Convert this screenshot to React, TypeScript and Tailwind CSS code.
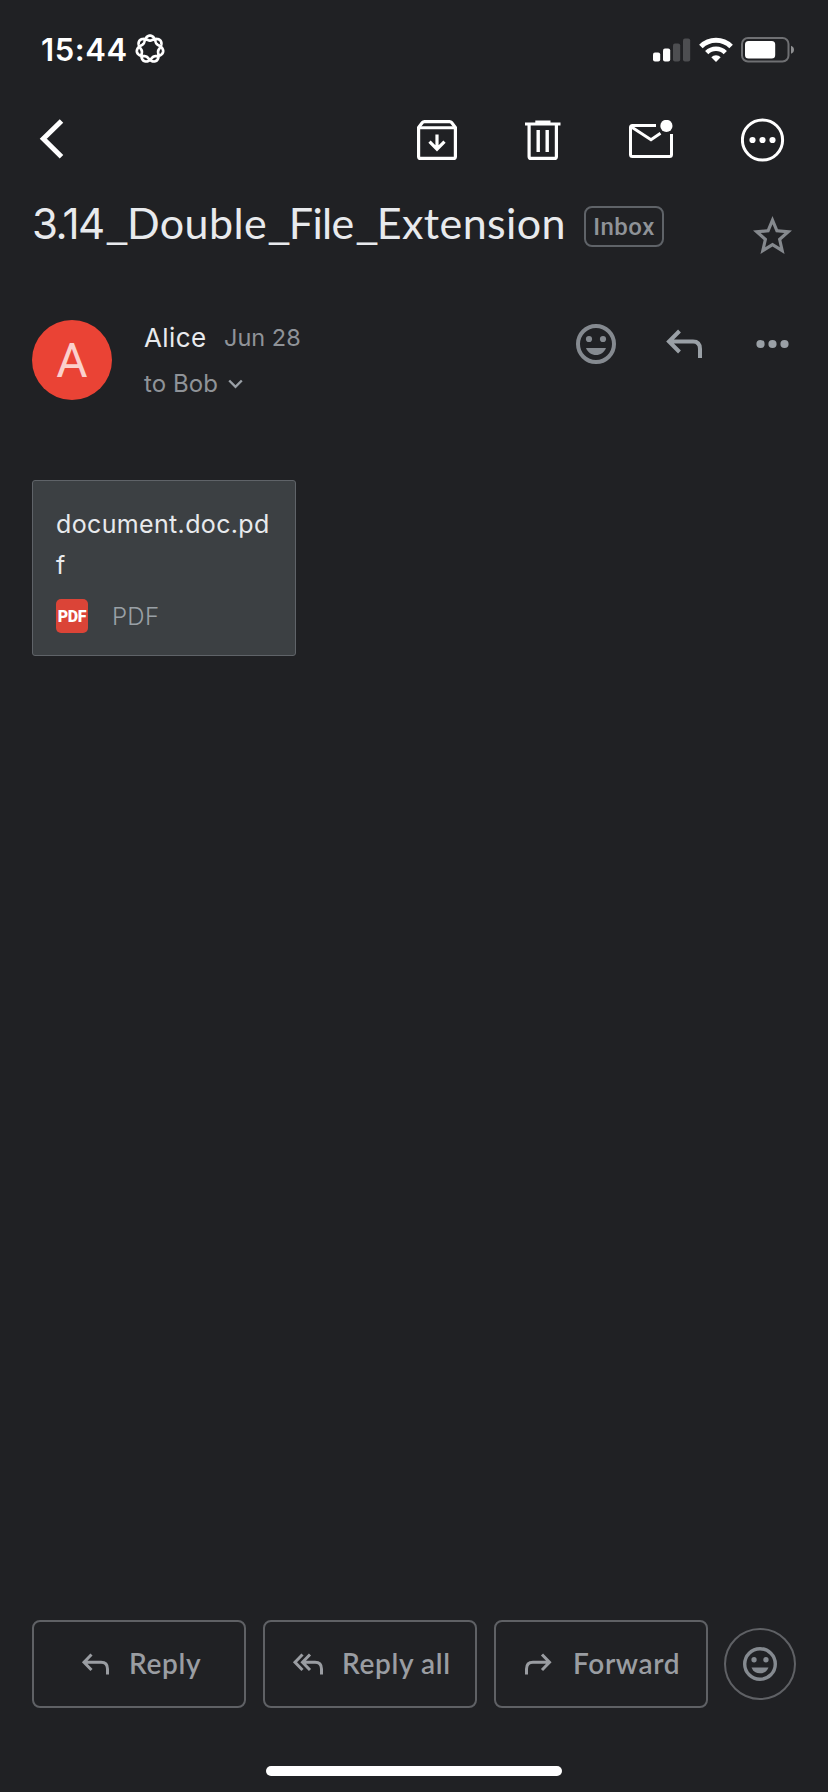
import type { ReactNode } from "react";

// One strand that winds round twice: seven lobes, seven crossings.
const flowerPath =
  Array.from({ length: 281 }, (_, i) => {
    const t = (i / 280) * Math.PI * 4;
    const r = 10.9 + 2.5 * Math.cos(3.5 * t);
    const x = 15 + r * Math.sin(t);
    const y = 15 - r * Math.cos(t);
    return `${i === 0 ? "M" : "L"}${x.toFixed(2)} ${y.toFixed(2)}`;
  }).join("") + "Z";

function FlowerIcon() {
  return (
    <svg className="ml-[8px] h-[30px] w-[30px]" viewBox="0 0 30 30" fill="none" stroke="#fff" strokeWidth="2.7">
      <path d={flowerPath} />
    </svg>
  );
}

function StatusBar() {
  return (
    <header className="flex h-[98px] items-center pl-[41px] pr-[33px]">
      <div className="flex items-center">
        <span className="w-[86px] whitespace-nowrap text-[31px] font-semibold leading-none tracking-[0.6px] text-white">15:44</span>
        <FlowerIcon />
      </div>
      <div className="ml-auto flex items-center pt-px">
        <svg className="h-[26px] w-[38px]" viewBox="0 0 38 26">
          <rect x="0" y="15.5" width="7.2" height="9" rx="2" fill="#fff" />
          <rect x="10" y="11.5" width="7.2" height="13" rx="2" fill="#fff" />
          <rect x="20" y="6.5" width="7.2" height="18" rx="2" fill="#4d4e51" />
          <rect x="30" y="1.5" width="7.2" height="23" rx="2" fill="#4d4e51" />
        </svg>
        <svg className="ml-[8px] h-[26px] w-[34px]" viewBox="0 0 34 26" fill="none" stroke="#fff">
          <path d="M1.9 9.6a21.4 21.4 0 0 1 30.2 0" strokeWidth="5" />
          <path d="M7.7 15.6a13.2 13.2 0 0 1 18.6 0" strokeWidth="4.6" />
          <path d="M12.3 20.3a6.6 6.6 0 0 1 9.4 0L17 25Z" fill="#fff" stroke="none" />
        </svg>
        <svg className="ml-[8px] h-[26px] w-[54px]" viewBox="0 0 54 26">
          <rect x="1" y="1" width="46.5" height="23.5" rx="6" fill="none" stroke="#6f7073" strokeWidth="2" />
          <rect x="4" y="4" width="30.2" height="17.5" rx="3.5" fill="#fff" />
          <path d="M50 8.8c4 1.2 4 6.8 0 8z" fill="#8e8f91" />
        </svg>
      </div>
    </header>
  );
}

function Toolbar() {
  return (
    <nav className="flex h-[84px] items-center pl-[38px] pr-[43px]">
      <svg className="h-[44px] w-[28px]" viewBox="0 0 28 44" fill="none" stroke="#fff" strokeWidth="5">
        <path d="M23.5 3 5.3 20.8 23.5 38.8" />
      </svg>
      <svg className="ml-auto h-[40px] w-[40px]" viewBox="0 0 40 40" fill="none" stroke="#fff" strokeWidth="3.2">
        <path d="M1.6 7.5 5.4 2.6Q6.2 1.6 7.5 1.6H32.5Q33.8 1.6 34.6 2.6L38.4 7.5V36.4Q38.4 38.4 36.4 38.4H3.6Q1.6 38.4 1.6 36.4Z" />
        <path d="M2 7.8H38" strokeWidth="3" />
        <path d="M20 14.5V28M12.5 21.7 20 29.2 27.5 21.7" />
      </svg>
      <svg className="ml-[68px] h-[40px] w-[36px]" viewBox="0 0 36 40" fill="none" stroke="#fff" strokeWidth="3.2">
        <path d="M0 4H35.5M10.3 2H25.5" />
        <path d="M4.1 4V36.4Q4.1 38.4 6.1 38.4H29.4Q31.4 38.4 31.4 36.4V4" />
        <path d="M13.2 10V32M22.2 10V32" strokeWidth="3.4" />
      </svg>
      <svg className="ml-[68px] h-[40px] w-[45px]" viewBox="0 0 45 40" fill="none" stroke="#fff" strokeWidth="3">
        <path d="M27 5.5H3.5Q1.5 5.5 1.5 7.5V34.5Q1.5 36.5 3.5 36.5H40.5Q42.5 36.5 42.5 34.5V14" />
        <path d="M2.5 7 22 19.7 31.5 13.3" />
        <circle cx="37.4" cy="5.9" r="6.1" fill="#fff" stroke="none" />
      </svg>
      <svg className="ml-[67px] h-[44px] w-[44px]" viewBox="0 0 44 44">
        <circle cx="21.5" cy="22" r="20.1" fill="none" stroke="#fff" strokeWidth="3" />
        <circle cx="11.5" cy="22" r="3.1" fill="#fff" />
        <circle cx="21.5" cy="22" r="3.1" fill="#fff" />
        <circle cx="31.5" cy="22" r="3.1" fill="#fff" />
      </svg>
    </nav>
  );
}

function Underscore() {
  return <span className="-ml-px mr-[5px] w-[17px] origin-left scale-x-[1.22] tracking-normal">_</span>;
}

function Subject() {
  return (
    <section className="flex h-[118px] items-start pl-[32px] pr-[36px] pt-[24px]">
      <h1 className="-mt-[3px] flex w-[534px] items-baseline whitespace-nowrap font-['Lato'] text-[43px] leading-[40px] tracking-[0.4px] text-[#e8eaed]">
        <span className="w-[74px] font-['Inter'] text-[42px] tracking-[-1.5px]">3.14</span>
        <Underscore />
        <span className="w-[141px]">Double</span>
        <Underscore />
        <span className="w-[67px] tracking-[-0.7px]">File</span>
        <Underscore />
        <span>Extension</span>
      </h1>
      <span className="ml-[18px] flex h-[41px] w-[80px] items-center justify-center rounded-[8px] border-2 border-[#5f6368] font-['Roboto'] text-[24px] font-medium tracking-[0.5px] text-[#8f9398]">
        Inbox
      </span>
      <svg className="ml-auto mt-[10px] h-[38px] w-[39px]" viewBox="2 2 20 19" preserveAspectRatio="none">
        <path
          fill="#85898e"
          d="M22 9.24l-7.19-.62L12 2 9.19 8.63 2 9.24l5.46 4.73L5.82 21 12 17.27 18.18 21l-1.63-7.03L22 9.24zM12 15.4l-3.76 2.27 1-4.28-3.32-2.88 4.38-.38L12 6.1l1.71 4.04 4.38.38-3.32 2.88 1 4.28L12 15.4z"
        />
      </svg>
    </section>
  );
}

function SmileIcon({ size }: { size: number }) {
  return (
    <svg width={size} height={size} viewBox="0 0 40 40" fill="#858a90">
      <circle cx="20" cy="20" r="18" fill="none" stroke="#858a90" strokeWidth="4" />
      <circle cx="13" cy="15" r="3.1" />
      <circle cx="27" cy="15" r="3.1" />
      <path d="M10 24H30C28 28.8 24.5 31 20 31S12 28.8 10 24Z" />
    </svg>
  );
}

function Sender() {
  return (
    <section className="flex h-[180px] items-start pl-[32px] pr-[39px] pt-[20px]">
      <div className="flex h-[80px] w-[80px] items-center justify-center rounded-full bg-[#ea4335] pt-[2px] font-['Roboto'] text-[48px] leading-none text-[#fbd0cc]">
        A
      </div>
      <div className="ml-[32px] text-[#8f9398]">
        <div className="flex h-[36px] items-center">
          <span className="w-[80px] text-[26px] leading-none tracking-[0.4px] text-[#e8eaed]">Alice</span>
          <span className="text-[23.5px] leading-none">Jun 28</span>
        </div>
        <div className="mt-[10px] flex h-[36px] items-center">
          <span className="w-[84px] text-[24px] leading-none tracking-[0.1px]">to Bob</span>
          <svg className="h-[10px] w-[15px]" viewBox="0 0 15 10" fill="none" stroke="#9aa0a6" strokeWidth="2.4">
            <path d="M1.2 1.5 7.5 7.8 13.8 1.5" />
          </svg>
        </div>
      </div>
      <div className="ml-auto flex h-[48px] items-center">
        <SmileIcon size={40} />
        <svg className="ml-[50px] h-[30px] w-[37px]" viewBox="0 0 37 30" fill="none" stroke="#9aa0a6" strokeWidth="4">
          <path d="M13.5 2 3 12.5 13.5 23M3 12.5H27Q34 12.5 34 20V29" />
        </svg>
        <svg className="ml-[53px] h-[10px] w-[33px]" viewBox="0 0 33 10" fill="#9aa0a6">
          <circle cx="4.5" cy="5" r="4.1" />
          <circle cx="16.5" cy="5" r="4.1" />
          <circle cx="28.5" cy="5" r="4.1" />
        </svg>
      </div>
    </section>
  );
}

function Attachment() {
  return (
    <article className="ml-[32px] h-[176px] w-[264px] rounded-[3px] border border-[#5f6368] bg-[#3c4043] pl-[23px] pr-[23px] pt-[23px]">
      <p className="break-all text-[25px] leading-[41px] tracking-[0.35px] text-[#e8eaed]">document.doc.pdf</p>
      <div className="mt-[13px] flex items-center">
        <span className="flex h-[34px] w-[32px] items-center justify-center rounded-[5px] bg-[#db4437] pt-px font-['Roboto'] text-[16px] font-black leading-none tracking-[-0.4px] text-white">
          PDF
        </span>
        <span className="ml-[24px] pt-[2px] text-[24px] font-light leading-none tracking-[0.3px] text-[#9aa0a6]">PDF</span>
      </div>
    </article>
  );
}

function ActionButton({ children }: { children: ReactNode }) {
  return (
    <button className="flex h-[88px] w-[214px] items-center rounded-[8px] border-2 border-[#5f6165] text-left font-['Lato'] text-[28px] font-semibold leading-none tracking-[0.65px] text-[#9a9da2]">
      {children}
    </button>
  );
}

function Actions() {
  return (
    <footer className="mt-auto flex h-[88px] items-center gap-[17px] pl-[32px]">
      <ActionButton>
        <svg className="ml-[47px] h-[22px] w-[29px]" viewBox="0 0 29 22" fill="none" stroke="currentColor" strokeWidth="3">
          <path d="M10.5 1.5 3 9.2 10.5 17M3 9.2H20Q26.5 9.2 26.5 16V21.5" />
        </svg>
        <span className="-mt-[3px] ml-[19px]">Reply</span>
      </ActionButton>
      <ActionButton>
        <svg className="ml-[27px] h-[22px] w-[32px]" viewBox="0 0 32 22" fill="none" stroke="currentColor" strokeWidth="3">
          <path d="M10.5 1.5 3 9.2 10.5 17M18 1.5 10.5 9.2 18 17M10.5 9.2H23Q29.5 9.2 29.5 16V21.5" />
        </svg>
        <span className="-mt-[3px] ml-[18px] whitespace-nowrap">Reply all</span>
      </ActionButton>
      <ActionButton>
        <svg className="ml-[28px] h-[22px] w-[29px]" viewBox="0 0 29 22" fill="none" stroke="currentColor" strokeWidth="3">
          <path d="M18 1.5 25.5 9.2 18 17M25.5 9.2H9Q2.5 9.2 2.5 16V21.5" />
        </svg>
        <span className="-mt-[3px] ml-[20px]">Forward</span>
      </ActionButton>
      <button className="-ml-px flex h-[72px] w-[72px] items-center justify-center rounded-full border-2 border-[#5f6165]">
        <SmileIcon size={34} />
      </button>
    </footer>
  );
}

export default function App() {
  return (
    <main className="flex h-[1792px] w-[828px] flex-col overflow-hidden bg-[#202124] font-['Inter',sans-serif]">
      <StatusBar />
      <Toolbar />
      <Subject />
      <Sender />
      <Attachment />
      <Actions />
      <div className="mb-[16px] ml-[266px] mt-[58px] h-[10px] w-[296px] shrink-0 rounded-full bg-white" />
    </main>
  );
}
